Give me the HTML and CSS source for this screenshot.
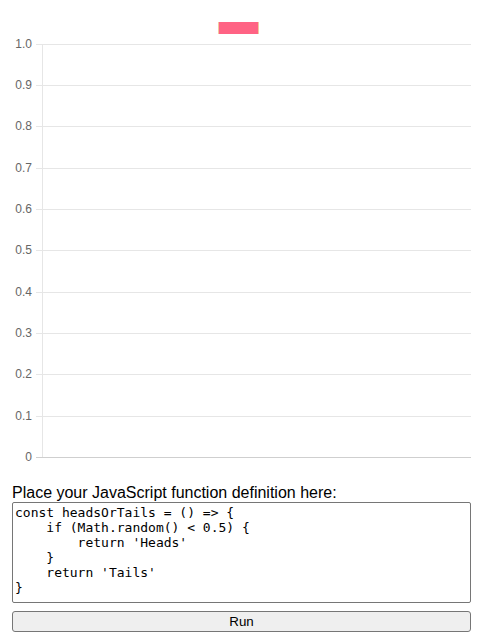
FILE: index.html
```html
<!DOCTYPE html>
<html>
<head>
<meta charset="utf-8">
<link rel="stylesheet" href="styles.css">
</head>
<body>
<div class="chart">
<svg class="chart-svg" width="484" height="472" viewBox="0 0 484 472" xmlns="http://www.w3.org/2000/svg">
  <rect x="218.5" y="22" width="40" height="12" fill="#ff6384"/>
  <line x1="218.5" y1="22" x2="218.5" y2="34" stroke="#f2c9a0" stroke-width="1"/>
  <line x1="258.5" y1="22" x2="258.5" y2="34" stroke="#f2c9a0" stroke-width="1"/>
  <g stroke="#e6e6e6" stroke-width="1">
    <line x1="36" y1="44.5" x2="471" y2="44.5"/>
    <line x1="36" y1="85.5" x2="471" y2="85.5"/>
    <line x1="36" y1="126.5" x2="471" y2="126.5"/>
    <line x1="36" y1="168.5" x2="471" y2="168.5"/>
    <line x1="36" y1="209.5" x2="471" y2="209.5"/>
    <line x1="36" y1="250.5" x2="471" y2="250.5"/>
    <line x1="36" y1="292.5" x2="471" y2="292.5"/>
    <line x1="36" y1="333.5" x2="471" y2="333.5"/>
    <line x1="36" y1="374.5" x2="471" y2="374.5"/>
    <line x1="36" y1="416.5" x2="471" y2="416.5"/>
    <line x1="42.5" y1="44" x2="42.5" y2="457"/>
  </g>
  <line x1="36" y1="457.5" x2="471" y2="457.5" stroke="#cfcfcf" stroke-width="1"/>
  <g class="tick" text-anchor="end">
    <text x="32" y="48">1.0</text>
    <text x="32" y="89">0.9</text>
    <text x="32" y="130">0.8</text>
    <text x="32" y="172">0.7</text>
    <text x="32" y="213">0.6</text>
    <text x="32" y="254">0.5</text>
    <text x="32" y="296">0.4</text>
    <text x="32" y="337">0.3</text>
    <text x="32" y="378">0.2</text>
    <text x="32" y="420">0.1</text>
    <text x="32" y="461">0</text>
  </g>
</svg>
</div>
<div class="form">
  <label class="prompt" for="code">Place your JavaScript function definition here:</label>
  <textarea id="code" class="code" spellcheck="false">const headsOrTails = () =&gt; {
    if (Math.random() &lt; 0.5) {
        return 'Heads'
    }
    return 'Tails'
}</textarea>
  <button class="run">Run</button>
</div>
</body>
</html>
```
FILE: styles.css
```css
html, body {
  margin: 0;
  padding: 0;
  background: #ffffff;
}
body {
  font-family: "Liberation Sans", Arial, sans-serif;
  width: 484px;
  height: 643px;
  overflow: hidden;
}
.chart {
  height: 483px;
}
.chart-svg {
  display: block;
}
.tick {
  font-family: "Liberation Sans", Arial, sans-serif;
  font-size: 12px;
  fill: #666666;
}
.form {
  padding: 0 13px 0 12px;
  display: flex;
  flex-direction: column;
}
.prompt {
  display: block;
  font-size: 16px;
  line-height: 19px;
  color: #000;
}
.code {
  display: block;
  box-sizing: border-box;
  width: 459px;
  height: 101px;
  margin: 0;
  padding: 2px 2px;
  border: 1px solid #767676;
  border-radius: 2px;
  font-family: "DejaVu Sans Mono", "Liberation Mono", monospace;
  font-size: 13px;
  line-height: 15px;
  color: #000;
  resize: none;
  white-space: pre;
  overflow: hidden;
  tab-size: 4;
}
.run {
  display: block;
  box-sizing: border-box;
  width: 459px;
  height: 21px;
  margin: 8px 0 0 0;
  padding: 0;
  border: 1px solid #767676;
  border-radius: 3px;
  background: #efefef;
  font-family: "Liberation Sans", Arial, sans-serif;
  font-size: 13.33px;
  color: #000;
}
```
